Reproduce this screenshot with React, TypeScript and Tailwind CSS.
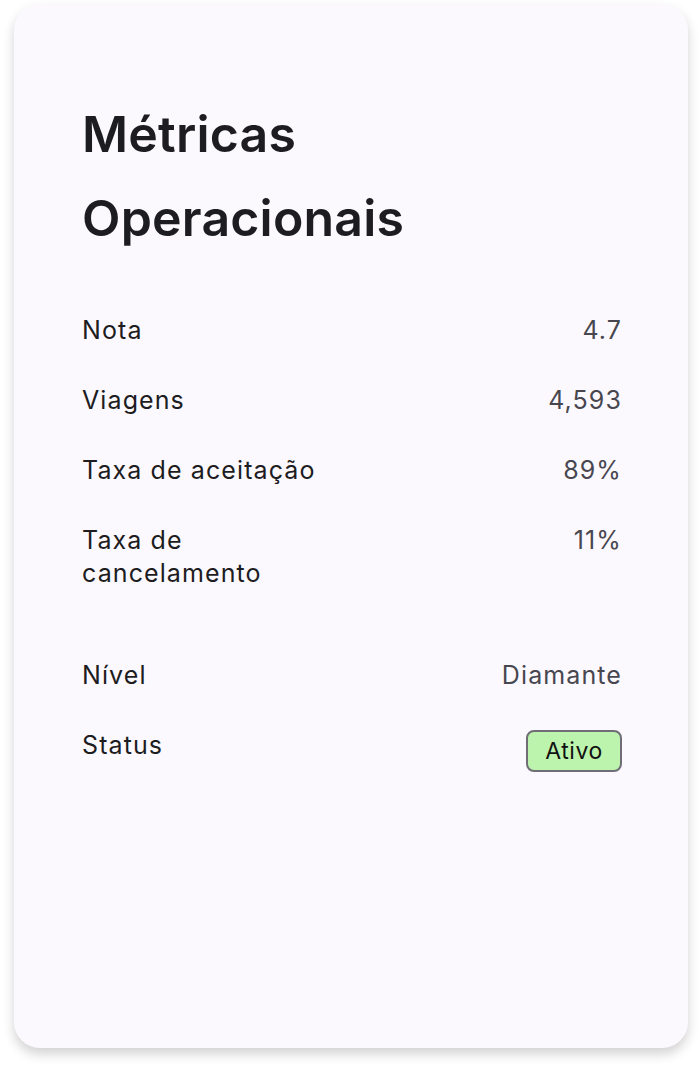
export default function App() {
  const rows = [
    { label: "Nota", value: "4.7" },
    { label: "Viagens", value: "4,593" },
    { label: "Taxa de aceitação", value: "89%" },
    { label: "Taxa de cancelamento", value: "11%" },
  ];

  return (
    <div className="min-h-screen bg-white pl-[14px] pr-[11px] pt-[4px] pb-[19px] font-['Inter',sans-serif]">
      <div className="h-[1044px] rounded-[26px] bg-[#fbf9fe] pl-[68px] pr-[66px] pt-[88px] shadow-[0_6px_12px_rgba(0,0,0,0.18)]">
        <h1 className="text-[50px] font-semibold leading-[84px] tracking-[0.2px] text-[#1d1c21] w-[380px]">
          Métricas Operacionais
        </h1>

        <div className="mt-[54px] flex flex-col gap-[37px]">
          {rows.map((r) => (
            <div key={r.label} className="flex justify-between items-start text-[25px] leading-[33px] tracking-[1.1px]">
              <span className="text-[#1d1c21] w-[250px]">{r.label}</span>
              <span className="text-[#48474f]">{r.value}</span>
            </div>
          ))}
        </div>

        <div className="mt-[69px] flex flex-col gap-[37px]">
          <div className="flex justify-between items-start text-[25px] leading-[33px] tracking-[1.1px]">
            <span className="text-[#1d1c21]">Nível</span>
            <span className="text-[#48474f]">Diamante</span>
          </div>
          <div className="flex justify-between items-start text-[25px] leading-[33px] tracking-[1.1px]">
            <span className="text-[#1d1c21]">Status</span>
            <span className="mt-[1px] rounded-[8px] border-2 border-[#6f6e76] bg-[#bdf4ad] px-[17px] py-[2px] text-[#111] text-[23px] tracking-[0.6px] leading-[34px]">
              Ativo
            </span>
          </div>
        </div>
      </div>
    </div>
  );
}
